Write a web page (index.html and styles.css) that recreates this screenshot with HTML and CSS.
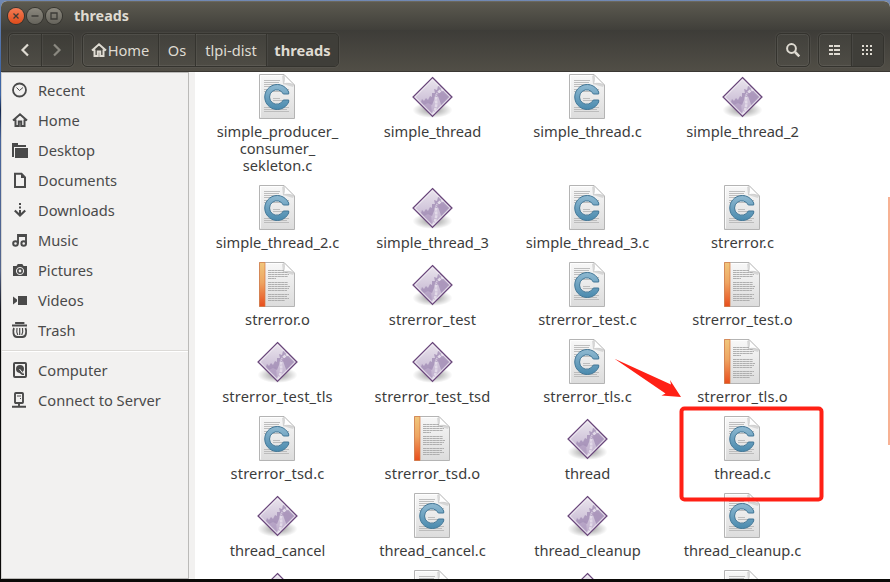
FILE: index.html
```html
<!DOCTYPE html>
<html lang="en">
<head>
<meta charset="utf-8">
<title>threads</title>
<link rel="stylesheet" href="styles.css">
</head>
<body>
<svg class="defs" width="0" height="0" aria-hidden="true">
  <defs>
    <linearGradient id="paper" x1="0" y1="0" x2="0" y2="1"><stop offset="0" stop-color="#f8f8f8"/><stop offset="1" stop-color="#dcdcdc"/></linearGradient>
    <linearGradient id="blue" x1="0" y1="0" x2="0" y2="1"><stop offset="0" stop-color="#8fb9d1"/><stop offset="1" stop-color="#4a8aae"/></linearGradient>
    <linearGradient id="spine" x1="0" y1="0" x2="0" y2="1"><stop offset="0" stop-color="#f0c67c"/><stop offset=".45" stop-color="#eea562"/><stop offset="1" stop-color="#e84d1c"/></linearGradient>
    <linearGradient id="violet" x1="0" y1="0" x2="0" y2="1"><stop offset="0" stop-color="#ebe6ee"/><stop offset=".5" stop-color="#d3c8dc"/><stop offset="1" stop-color="#b9a6c8"/></linearGradient>
    <radialGradient id="shade"><stop offset="0" stop-color="#000" stop-opacity=".42"/><stop offset="1" stop-color="#000" stop-opacity="0"/></radialGradient>
    <clipPath id="gem"><path d="M20.500 4 39.500 23 20.500 42 1.500 23z"/></clipPath>
    <symbol id="page" viewBox="0 0 36 45">
      <path d="M.5.500H25L35.500 11V44.500H.5z" fill="url(#paper)" stroke="#b4b4b4"/>
      <path d="M1.500 43.500V1.500H24.500" fill="none" stroke="#fff" opacity=".8"/>
      <path d="M23 2 24 10 34 13 35 11 25 1z" fill="#999" opacity=".3"/>
      <path d="M25 .8C25.600 4 25.600 7 24.500 9.800 28 8.800 32 9.200 35.300 11z" fill="#fff" stroke="#c4c4c4" stroke-width=".7"/>
    </symbol>
    <symbol id="file-c" viewBox="0 0 36 45">
      <use href="#page" width="36" height="45"/>
      <path d="M5 6.500H21M5 8.500H20M5 10.500H21M5 12.500H20M5 15.500H30M5 17.500H29M14 24.500H21M14 26.500H30M5 33.500H30M5 35.500H28M5 37.500H30" stroke="#b8b8b8" stroke-width=".9"/>
      <path d="M29.700 20V18A12.500 12.500 0 1 0 29.700 28V26H24.300A7.200 7.200 0 1 1 24.300 20z" fill="url(#blue)" stroke="#427797" stroke-width="1"/>
    </symbol>
    <symbol id="file-o" viewBox="0 0 36 45">
      <use href="#page" width="36" height="45"/>
      <path d="M.5.500h5.500v44H.5z" fill="url(#spine)" stroke="#d7773f" stroke-width=".7"/>
      <path d="M9 8.500H25M9 10.500H29M9 12.500H30M9 14.500H29M9 16.500H17M9 20.500H29M9 22.500H29M9 24.500H31M9 26.500H30M9 28.500H28M9 32.500H30M9 34.500H28M9 36.500H30M9 38.500H26" stroke="#a8a8a8" stroke-width=".9" stroke-dasharray="3 .3"/>
    </symbol>
    <symbol id="file-x" viewBox="0 0 41 45">
      <ellipse cx="20.500" cy="36" rx="20" ry="8" fill="url(#shade)"/>
      <path d="M20.500 3.500 40 23 20.500 42.500 1 23z" fill="url(#violet)"/>
      <g clip-path="url(#gem)">
        <path d="M9 28 10 25 12 27 14 24 16 26 18 22 20 23 20 19 23 19 22 15 25 16 26 12 30 12 40 23 30 33 26 22 22 26 20 31 16 29 12 31z" fill="#9f89b3" opacity=".75"/>
        <path d="M32 15C26 17 23 22 24 27C25 32 23 37 20 42" fill="none" stroke="#e2dae8" stroke-width="2.600" stroke-dasharray="3 .8"/>
        <path d="M24 20C28 18 31 19 36 23L31 28C30 24 28 22 25 22z" fill="#ab96bc" opacity=".8"/>
        <path d="M5 26 12 30 19 28 20 41z" fill="#a892ba" opacity=".55"/>
      </g>
      <path d="M20.500 5.300 38.200 23 20.500 40.700 2.800 23z" fill="none" stroke="#f2edf4" stroke-width="1.200" opacity=".75"/>
      <path d="M20.500 3.500 40 23 20.500 42.500 1 23z" fill="none" stroke="#69467a" stroke-width="1.200"/>
    </symbol>
    <symbol id="home" viewBox="0 0 16 16"><path d="M1 8.500 8 2.300 15 8.500M3.500 7.500V14H6.800V9.500H9.200V14H12.500V7.500" fill="none" stroke="currentColor" stroke-width="2"/></symbol>
  </defs>
</svg>

<div class="window">
  <header class="titlebar">
    <span class="wm close"><svg viewBox="0 0 16 16"><path d="m5.500 5.500 5 5m0-5-5 5"/></svg></span>
    <span class="wm"><svg viewBox="0 0 16 16"><path d="M4.500 8h7"/></svg></span>
    <span class="wm"><svg viewBox="0 0 16 16"><path d="M5 5h6v6H5z"/></svg></span>
    <h1>threads</h1>
  </header>

  <nav class="toolbar">
    <div class="group nav">
      <button class="seg"><svg width="10" height="14" viewBox="0 0 10 14"><path d="M8 1.500 2.500 7 8 12.500" fill="none" stroke="#dfdbd2" stroke-width="2.200"/></svg></button>
      <button class="seg off"><svg width="10" height="14" viewBox="0 0 10 14"><path d="M2 1.500 7.500 7 2 12.500" fill="none" stroke="#8b8981" stroke-width="2.200"/></svg></button>
    </div>
    <div class="group path">
      <button class="seg p-home"><svg width="16" height="16"><use href="#home"/></svg><span>Home</span></button>
      <button class="seg p-os">Os</button>
      <button class="seg p-dist">tlpi-dist</button>
      <button class="seg p-cur on">threads</button>
    </div>
    <div class="group search">
      <button class="seg"><svg width="16" height="16" viewBox="0 0 16 16" fill="none" stroke="#dfdbd2"><circle cx="6.500" cy="6.500" r="4.400" stroke-width="2"/><path d="m10 10 4.300 4.300" stroke-width="2.500"/></svg></button>
    </div>
    <div class="group views">
      <button class="seg"><svg width="12" height="10" viewBox="0 0 12 10" stroke="#dfdbd2" stroke-width="2"><path d="M0 1h4M5 1h6M0 5h4M5 5h6M0 9h4M5 9h6"/></svg></button>
      <button class="seg on"><svg width="10" height="10" viewBox="0 0 10 10" stroke="#dfdbd2" stroke-width="2" stroke-dasharray="2 2"><path d="M0 1h10M0 5h10M0 9h10"/></svg></button>
    </div>
  </nav>

  <div class="body">
    <aside class="sidebar">
      <ul>
        <li><svg viewBox="0 0 16 16"><circle cx="7.500" cy="8" r="6.500" fill="none" stroke="currentColor" stroke-width="1.800"/><path d="m4.500 5.500 3 3 3.500-3" fill="none" stroke="currentColor"/></svg>Recent</li>
        <li><svg viewBox="0 0 16 16"><use href="#home"/></svg>Home</li>
        <li><svg viewBox="0 0 16 16" fill="currentColor"><path d="M0 1h6v2h8v2H2v10H0z"/><path d="M3 6h13v10H3z"/></svg>Desktop</li>
        <li><svg viewBox="0 0 16 16"><path d="M3 1.800H9.500L13 5.500V15H3z" fill="none" stroke="currentColor" stroke-width="2"/><path d="M9 1v5h5z" fill="currentColor"/></svg>Documents</li>
        <li><svg viewBox="0 0 16 16"><path d="M8 1v2M8 4.500v2M8 8v5" fill="none" stroke="currentColor" stroke-width="2"/><path d="m2.800 8.500 5.200 5 5.200-5" fill="none" stroke="currentColor" stroke-width="2.200"/></svg>Downloads</li>
        <li><svg viewBox="0 0 16 16"><path d="M6 11.500V3h8v8.500M5.500 4H14" fill="none" stroke="currentColor" stroke-width="1.900"/><g fill="none" stroke="currentColor" stroke-width="2"><circle cx="3.500" cy="11.500" r="2.300"/><circle cx="11.700" cy="11.500" r="2.300"/></g></svg>Music</li>
        <li><svg viewBox="0 0 16 16"><path fill="currentColor" fill-rule="evenodd" d="M1 4h3.500l1.300-2h4.500l1.300 2H15v10H1zM8 5a4 4 0 1 0 .01 0z"/><circle cx="8" cy="9" r="2.200" fill="none" stroke="currentColor" stroke-width="1.600"/></svg>Pictures</li>
        <li><svg viewBox="0 0 16 16" fill="currentColor"><path d="M1 4.500 5 7.500v2L1 12.500z"/><path d="M6 4h9v9H6z"/></svg>Videos</li>
        <li><svg viewBox="0 0 16 16" fill="none" stroke="currentColor"><path d="M4 2V1h7.500v1M0 3.500h15" stroke-width="1.800"/><path d="M2 6Q1 8 1.500 11.500 2 15 5 15H10.500Q13.500 15 14 11.500 14.500 8 13.500 6" stroke-width="1.800"/><path d="M5 6q-.8 4 .8 7M7.700 6v7M10.500 6q.8 4-.8 7" stroke-width="1.200"/></svg>Trash</li>
      </ul>
      <ul class="devices">
        <li><svg viewBox="0 0 16 16"><rect x="2" y="1" width="12" height="14" rx="1" fill="none" stroke="currentColor" stroke-width="2"/><path d="M4 7a4 4 0 0 1 8 0q0 2-1.500 2.800L12 12v1h-2L7.500 11Q4 10.500 4 7z" fill="currentColor"/><path d="m7.500 7 3.500 4.500" stroke="#f2f1f0"/></svg>Computer</li>
        <li><svg viewBox="0 0 16 16" fill="none" stroke="currentColor" stroke-width="1.900"><rect x="3" y="1" width="8" height="10" rx=".8"/><path d="M7 11v3M0 14.800h14"/><path d="M5 4h4M8 6.500h1" stroke-width="1"/></svg>Connect to Server</li>
      </ul>
    </aside>

    <main class="files">
      <div class="file c"><svg><use href="#file-c"/></svg><span>simple_producer_<br>consumer_<br>sekleton.c</span></div>
      <div class="file x"><svg><use href="#file-x"/></svg><span>simple_thread</span></div>
      <div class="file c"><svg><use href="#file-c"/></svg><span>simple_thread.c</span></div>
      <div class="file x"><svg><use href="#file-x"/></svg><span>simple_thread_2</span></div>

      <div class="file c"><svg><use href="#file-c"/></svg><span>simple_thread_2.c</span></div>
      <div class="file x"><svg><use href="#file-x"/></svg><span>simple_thread_3</span></div>
      <div class="file c"><svg><use href="#file-c"/></svg><span>simple_thread_3.c</span></div>
      <div class="file c wide"><svg><use href="#file-c"/></svg><span>strerror.c</span></div>

      <div class="file o wide"><svg><use href="#file-o"/></svg><span>strerror.o</span></div>
      <div class="file x wide"><svg><use href="#file-x"/></svg><span>strerror_test</span></div>
      <div class="file c wide"><svg><use href="#file-c"/></svg><span>strerror_test.c</span></div>
      <div class="file o wide"><svg><use href="#file-o"/></svg><span>strerror_test.o</span></div>

      <div class="file x wide"><svg><use href="#file-x"/></svg><span>strerror_test_tls</span></div>
      <div class="file x wide"><svg><use href="#file-x"/></svg><span>strerror_test_tsd</span></div>
      <div class="file c wide"><svg><use href="#file-c"/></svg><span>strerror_tls.c</span></div>
      <div class="file o wide"><svg><use href="#file-o"/></svg><span>strerror_tls.o</span></div>

      <div class="file c wide"><svg><use href="#file-c"/></svg><span>strerror_tsd.c</span></div>
      <div class="file o wide"><svg><use href="#file-o"/></svg><span>strerror_tsd.o</span></div>
      <div class="file x"><svg><use href="#file-x"/></svg><span>thread</span></div>
      <div class="file c"><svg><use href="#file-c"/></svg><span>thread.c</span></div>

      <div class="file x"><svg><use href="#file-x"/></svg><span>thread_cancel</span></div>
      <div class="file c"><svg><use href="#file-c"/></svg><span>thread_cancel.c</span></div>
      <div class="file x"><svg><use href="#file-x"/></svg><span>thread_cleanup</span></div>
      <div class="file c"><svg><use href="#file-c"/></svg><span>thread_cleanup.c</span></div>

      <div class="file x"><svg><use href="#file-x"/></svg></div>
      <div class="file c"><svg><use href="#file-c"/></svg></div>
      <div class="file x"><svg><use href="#file-x"/></svg></div>
      <div class="file c"><svg><use href="#file-c"/></svg></div>
    </main>
    <div class="thumb"></div>
  </div>
</div>

<svg class="marks" width="890" height="582" viewBox="0 0 890 582">
  <rect x="681.500" y="408.500" width="140" height="91" rx="3" fill="none" stroke="#ff2015" stroke-width="4"/>
  <path d="M614.500 358.800 671 384.500 670 380 681 397 661.500 395.500 665.500 393.500z" fill="#ff2015"/>
</svg>
</body>
</html>
```
FILE: styles.css
```css
* { box-sizing: border-box; }

body {
  margin: 0;
  width: 890px;
  height: 582px;
  overflow: hidden;
  padding: 1px 0 3px 1px;
  background: linear-gradient(#7189b3 0, #3f66a5 70px, #3f66a5 95px, #14284f 110px, #48659c 140px, #54658c 270px, #15151c 310px, #080808 340px, #0b0a08 100%);
  font: 14.67px/17px "Noto Sans", "Open Sans", sans-serif;
  color: #3c3c3c;
}

.defs { position: absolute; }

.window {
  height: 578px;
  display: flex;
  flex-direction: column;
  overflow: hidden;
  border-radius: 6px 6px 0 0;
  background: #fff;
}

.titlebar {
  flex: none;
  height: 29px;
  display: flex;
  align-items: center;
  gap: 3px;
  padding-left: 7px;
  background: linear-gradient(#5c5a50, #403f3a);
  border-top: 1px solid #6b685e;
}

.titlebar h1 {
  margin: -1px 0 0 9px;
  font-size: 14.3px;
  line-height: 20px;
  color: #dfdbd2;
}

.wm {
  width: 16px;
  height: 16px;
  border-radius: 50%;
  background: linear-gradient(#8b887e, #66645c);
  box-shadow: 0 0 0 1px #35342f;
}

.wm svg { display: block; fill: none; stroke: #3c3b37; stroke-width: 1.3; }
.wm.close { background: linear-gradient(#f47c55, #df4c1b); }

.toolbar {
  flex: none;
  height: 42px;
  display: flex;
  align-items: flex-start;
  padding: 3px 6px 0 7px;
  background: linear-gradient(#3d3c38, #514e46);
  border-bottom: 1px solid #3a3833;
}

.group {
  display: flex;
  height: 34px;
  border: 1px solid #34332e;
  border-radius: 5px;
  box-shadow: 0 0 0 1px #ffffff0b, inset 0 0 0 1px #ffffff12;
  background: linear-gradient(#42413c, #4e4c45);
  overflow: hidden;
}

.nav { width: 66px; }
.path { width: 257px; margin-left: 8px; }
.search { width: 34px; margin-left: auto; }
.views { width: 66px; margin-left: 8px; }

.seg {
  flex: 1 1 0;
  display: flex;
  align-items: center;
  justify-content: center;
  gap: 1px;
  padding: 0;
  border: 0;
  background: none;
  font: inherit;
  color: #dfdbd2;
}

.seg + .seg { border-left: 1px solid #35342f; box-shadow: inset 1px 0 #ffffff0d; }
.seg.off { background: #00000012; }
.seg.on { background: #3f3e39; font-weight: bold; }
.p-home { flex: 0 0 75px; }
.p-home svg { margin-left: -1px; }
.p-os { flex: 0 0 37px; }
.p-dist { flex: 0 0 71px; }

.body {
  flex: 1;
  min-height: 0;
  position: relative;
  display: flex;
}

.sidebar {
  flex: none;
  width: 188px;
  padding-top: 2px;
  background: #f2f1f0;
  border: 1px solid #bbbab8;
  border-left-color: #d5d4d2;
}

.sidebar ul { margin: 0; padding: 0; list-style: none; }

.sidebar li {
  height: 30px;
  display: flex;
  align-items: center;
  gap: 10px;
  padding-left: 10px;
  color: #4a4a4a;
}

.sidebar svg { width: 16px; height: 16px; flex: none; }

.sidebar .devices {
  margin-top: 5px;
  padding-top: 4px;
  border-top: 1px solid #dcdad7;
  box-shadow: inset 0 1px #fff;
}

.files {
  flex: 1;
  display: grid;
  grid-template-columns: repeat(4, 155px);
  align-content: start;
  row-gap: 11px;
  padding: 2px 0 0 5px;
  border-left: 6px solid #f2f1f0;
  overflow: hidden;
}

.file {
  display: flex;
  flex-direction: column;
  align-items: center;
  gap: 4px;
  text-align: center;
}

.file svg { width: 36px; height: 45px; margin-right: 1px; }
.file.x svg { width: 41px; }
.file span { white-space: nowrap; }
.file.wide span { letter-spacing: .15px; }

.thumb {
  position: absolute;
  right: 0;
  top: 125px;
  width: 2px;
  height: 248px;
  background: #f8b194;
}

.marks { position: absolute; left: 0; top: 0; }
```
